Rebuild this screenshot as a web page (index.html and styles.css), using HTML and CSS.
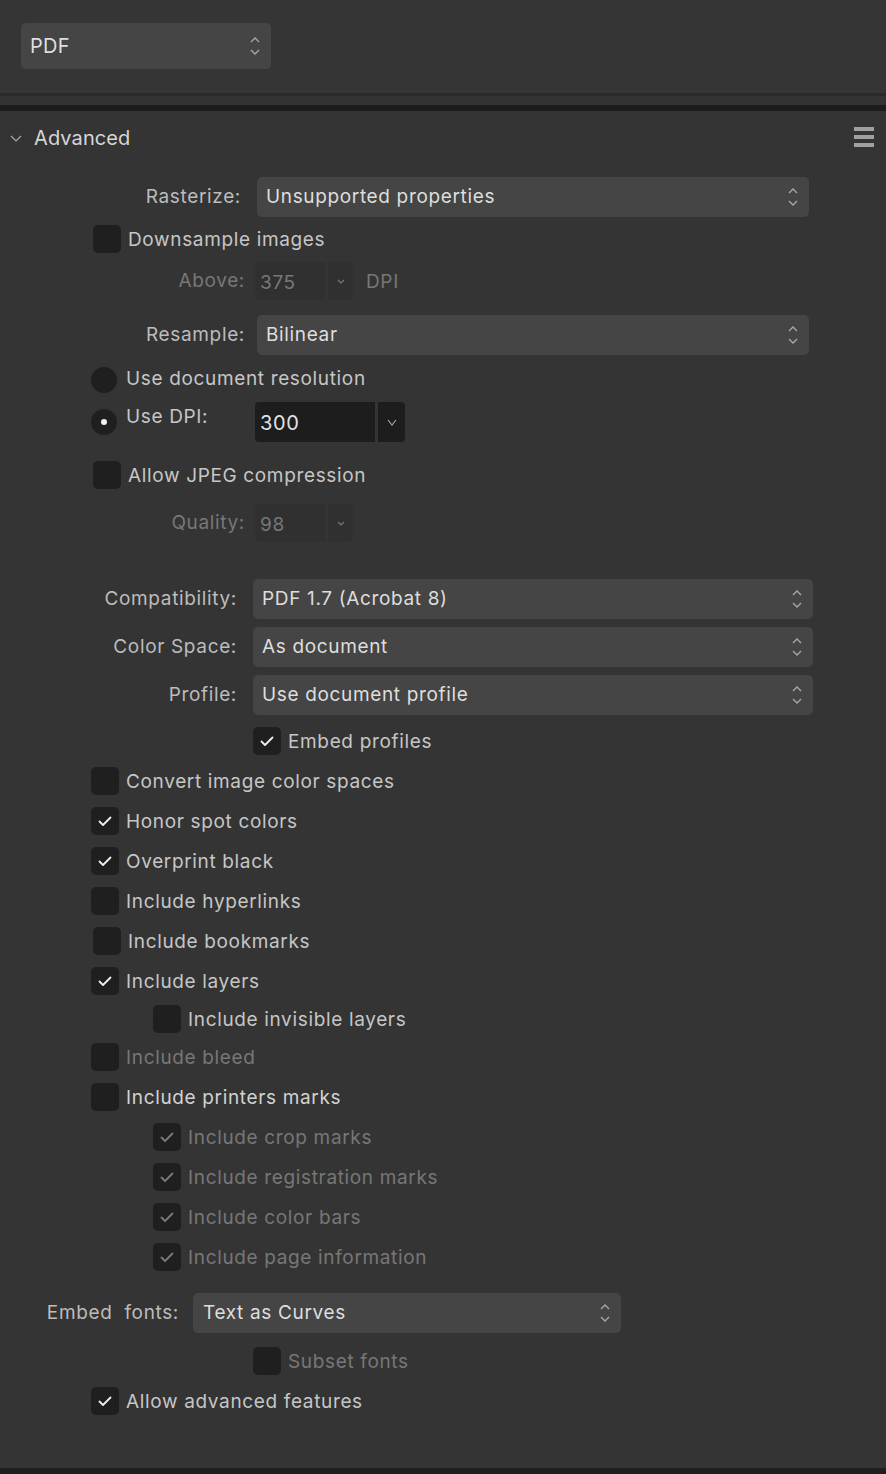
FILE: index.html
```html
<!DOCTYPE html>
<html lang="en">
<head>
    <meta charset="UTF-8">
    <title>Export - PDF Advanced</title>
    <link rel="stylesheet" href="styles.css">
</head>
<body>
    <div class="top">
        <div class="select fmt">
            <span>PDF</span>
            <svg class="updown" viewBox="0 0 10 18" width="10" height="18"><path d="M1 5L5 1L9 5M1 13L5 17L9 13"/></svg>
        </div>
    </div>
    <div class="split"></div>

    <section class="panel">
        <header class="panel-head">
            <svg class="twisty" viewBox="0 0 12 7" width="12" height="7"><path d="M1 1L6 6L11 1"/></svg>
            <h2>Advanced</h2>
            <span class="menu"><i></i><i></i><i></i></span>
        </header>

        <div class="field raster">
            <label class="field-label">Rasterize:</label>
            <div class="select wide">
                <span>Unsupported properties</span>
                <svg class="updown" viewBox="0 0 10 18" width="10" height="18"><path d="M1 5L5 1L9 5M1 13L5 17L9 13"/></svg>
            </div>
        </div>

        <div class="check shift m8">
            <span class="box"></span>
            <span class="text">Downsample images</span>
        </div>

        <div class="field small m9 off">
            <label class="field-label">Above:</label>
            <div class="spin">
                <span class="spin-val">375</span>
                <span class="spin-btn"><svg viewBox="0 0 8 5" width="8" height="5"><path d="M1 1L4 4L7 1"/></svg></span>
            </div>
            <span class="unit">DPI</span>
        </div>

        <div class="field resample m15">
            <label class="field-label">Resample:</label>
            <div class="select wide">
                <span>Bilinear</span>
                <svg class="updown" viewBox="0 0 10 18" width="10" height="18"><path d="M1 5L5 1L9 5M1 13L5 17L9 13"/></svg>
            </div>
        </div>

        <div class="check radio-row m12">
            <span class="radio"></span>
            <span class="text">Use document resolution</span>
        </div>

        <div class="check radio-row dpi m9">
            <span class="radio on"></span>
            <span class="text dpi-text">Use DPI:</span>
            <div class="spin dark">
                <span class="spin-val">300</span>
                <span class="spin-btn"><svg viewBox="0 0 10 7" width="10" height="7"><path d="M1 1L5 6L9 1"/></svg></span>
            </div>
        </div>

        <div class="check shift m19">
            <span class="box"></span>
            <span class="text">Allow JPEG compression</span>
        </div>

        <div class="field small m15 off">
            <label class="field-label">Quality:</label>
            <div class="spin">
                <span class="spin-val">98</span>
                <span class="spin-btn"><svg viewBox="0 0 8 5" width="8" height="5"><path d="M1 1L4 4L7 1"/></svg></span>
            </div>
        </div>

        <div class="field pdf m37">
            <label class="field-label">Compatibility:</label>
            <div class="select wide">
                <span>PDF 1.7 (Acrobat 8)</span>
                <svg class="updown" viewBox="0 0 10 18" width="10" height="18"><path d="M1 5L5 1L9 5M1 13L5 17L9 13"/></svg>
            </div>
        </div>
        <div class="field pdf m8">
            <label class="field-label">Color Space:</label>
            <div class="select wide">
                <span>As document</span>
                <svg class="updown" viewBox="0 0 10 18" width="10" height="18"><path d="M1 5L5 1L9 5M1 13L5 17L9 13"/></svg>
            </div>
        </div>
        <div class="field pdf m8">
            <label class="field-label">Profile:</label>
            <div class="select wide">
                <span>Use document profile</span>
                <svg class="updown" viewBox="0 0 10 18" width="10" height="18"><path d="M1 5L5 1L9 5M1 13L5 17L9 13"/></svg>
            </div>
        </div>

        <div class="check deep m12">
            <span class="box"><svg viewBox="0 0 14 11" width="14" height="11"><path d="M1.5 5.5L5 9L12.5 1.5"/></svg></span>
            <span class="text">Embed profiles</span>
        </div>

        <div class="check m12">
            <span class="box"></span>
            <span class="text">Convert image color spaces</span>
        </div>
        <div class="check m12">
            <span class="box"><svg viewBox="0 0 14 11" width="14" height="11"><path d="M1.5 5.5L5 9L12.5 1.5"/></svg></span>
            <span class="text">Honor spot colors</span>
        </div>
        <div class="check m12">
            <span class="box"><svg viewBox="0 0 14 11" width="14" height="11"><path d="M1.5 5.5L5 9L12.5 1.5"/></svg></span>
            <span class="text">Overprint black</span>
        </div>
        <div class="check m12">
            <span class="box"></span>
            <span class="text">Include hyperlinks</span>
        </div>
        <div class="check shift m12">
            <span class="box"></span>
            <span class="text">Include bookmarks</span>
        </div>
        <div class="check m12">
            <span class="box"><svg viewBox="0 0 14 11" width="14" height="11"><path d="M1.5 5.5L5 9L12.5 1.5"/></svg></span>
            <span class="text">Include layers</span>
        </div>
        <div class="check sub m10">
            <span class="box"></span>
            <span class="text">Include invisible layers</span>
        </div>
        <div class="check m10 off">
            <span class="box"></span>
            <span class="text">Include bleed</span>
        </div>
        <div class="check m12">
            <span class="box"></span>
            <span class="text bright">Include printers marks</span>
        </div>
        <div class="check sub m12 off">
            <span class="box"><svg viewBox="0 0 14 11" width="14" height="11"><path d="M1.5 5.5L5 9L12.5 1.5"/></svg></span>
            <span class="text">Include crop marks</span>
        </div>
        <div class="check sub m12 off">
            <span class="box"><svg viewBox="0 0 14 11" width="14" height="11"><path d="M1.5 5.5L5 9L12.5 1.5"/></svg></span>
            <span class="text">Include registration marks</span>
        </div>
        <div class="check sub m12 off">
            <span class="box"><svg viewBox="0 0 14 11" width="14" height="11"><path d="M1.5 5.5L5 9L12.5 1.5"/></svg></span>
            <span class="text">Include color bars</span>
        </div>
        <div class="check sub m12 off">
            <span class="box"><svg viewBox="0 0 14 11" width="14" height="11"><path d="M1.5 5.5L5 9L12.5 1.5"/></svg></span>
            <span class="text">Include page information</span>
        </div>

        <div class="field fonts m22">
            <label class="field-label">Embed&nbsp; fonts:</label>
            <div class="select narrow">
                <span>Text as Curves</span>
                <svg class="updown" viewBox="0 0 10 18" width="10" height="18"><path d="M1 5L5 1L9 5M1 13L5 17L9 13"/></svg>
            </div>
        </div>

        <div class="check deep m14 off">
            <span class="box"></span>
            <span class="text">Subset fonts</span>
        </div>
        <div class="check m12">
            <span class="box"><svg viewBox="0 0 14 11" width="14" height="11"><path d="M1.5 5.5L5 9L12.5 1.5"/></svg></span>
            <span class="text">Allow advanced features</span>
        </div>
    </section>
    <div class="foot"></div>
</body>
</html>
```

FILE: styles.css
```css
html, body {
    margin: 0;
    height: 100%;
}
body {
    background: #343434;
    color: #c6c6c6;
    font-family: Inter, "Noto Sans", sans-serif;
    font-size: 19px;
    letter-spacing: 0.65px;
    display: flex;
    flex-direction: column;
    overflow: hidden;
}

/* format picker */
.top {
    height: 93px;
    box-sizing: border-box;
    padding: 23px 0 0 21px;
    background: #353535;
}
.split {
    height: 9px;
    border-top: 3px solid #2a2a2a;
    border-bottom: 6px solid #1c1c1c;
    background: #333;
}

.select {
    display: flex;
    align-items: center;
    justify-content: space-between;
    height: 40px;
    box-sizing: border-box;
    padding: 0 11px 0 9px;
    background: #454545;
    border-radius: 5px;
    color: #dedede;
}
.select > span { padding-bottom: 1px; }
.select.fmt {
    width: 250px;
    height: 46px;
    padding-left: 9px;
    font-size: 20px;
    letter-spacing: 0.3px;
}
.select.wide { width: 552px; }
.field.pdf .select.wide { width: 560px; }
.select.narrow { width: 428px; padding-left: 10px; }
.updown {
    fill: none;
    stroke: #a9a9a9;
    stroke-width: 1.3;
}

/* panel */
.panel {
    flex: 1;
    background: #343434;
}
.panel-head {
    height: 54px;
    display: flex;
    align-items: center;
    padding: 0 12px 0 10px;
}
.twisty {
    fill: none;
    stroke: #a8a8a8;
    stroke-width: 1.2;
    margin-top: 1px;
}
.panel-head h2 {
    flex: 1;
    margin: 0 0 0 12px;
    font-size: 20px;
    font-weight: 400;
    letter-spacing: 0.1px;
    color: #d6d6d6;
}
.menu {
    display: flex;
    flex-direction: column;
    gap: 4px;
    margin-top: -2px;
}
.menu i {
    display: block;
    width: 20px;
    height: 4px;
    background: #a0a0a0;
}

/* label + control rows */
.field {
    display: flex;
    align-items: center;
    height: 40px;
}
.field-label {
    flex: none;
    text-align: right;
    color: #bcbcbc;
    padding-bottom: 2px;
}
.field.raster { margin-top: 12px; }
.field.raster .field-label { width: 241px; margin-right: 16px; }
.field.resample .field-label { width: 245px; margin-right: 12px; }
.field.small { height: 38px; }
.field.small .field-label { width: 245px; margin-right: 10px; }
.field.pdf .field-label { width: 237px; margin-right: 16px; }
.field.fonts .field-label { width: 179px; margin-right: 14px; }

.spin {
    display: flex;
    height: 38px;
    gap: 3px;
}
.spin-val {
    width: 70px;
    box-sizing: border-box;
    padding: 2px 0 0 5px;
    display: flex;
    align-items: center;
    background: #303030;
    border-radius: 4px 0 0 4px;
}
.spin-btn {
    width: 25px;
    display: flex;
    align-items: center;
    justify-content: center;
    background: #303030;
    border-radius: 0 4px 4px 0;
}
.spin-btn svg {
    fill: none;
    stroke: #7a7a7a;
    stroke-width: 1.1;
}
.unit {
    margin-left: 13px;
}
.spin.dark {
    height: 40px;
}
.spin.dark .spin-val {
    width: 120px;
    background: #1d1d1d;
    color: #e2e2e2;
    font-size: 20px;
}
.spin.dark .spin-btn {
    width: 27px;
    background: #1d1d1d;
}
.spin.dark .spin-btn svg {
    stroke: #a6a6a6;
}

/* checkboxes and radios */
.check {
    display: flex;
    align-items: center;
    height: 28px;
    margin-left: 91px;
}
.check.shift { margin-left: 93px; }
.check.sub { margin-left: 153px; }
.check.deep { margin-left: 253px; }
.box {
    flex: none;
    width: 28px;
    height: 28px;
    margin-right: 7px;
    border-radius: 5px;
    background: #1f1f1f;
    display: flex;
    align-items: center;
    justify-content: center;
}
.box svg {
    fill: none;
    stroke: #f0f0f0;
    stroke-width: 1.8;
    stroke-linecap: round;
    stroke-linejoin: round;
    margin-top: 1px;
}
.radio-row { height: 26px; }
.radio-row.dpi { height: 40px; }
.radio {
    flex: none;
    width: 26px;
    height: 26px;
    margin-right: 9px;
    border-radius: 50%;
    background: #1f1f1f;
    display: flex;
    align-items: center;
    justify-content: center;
}
.radio.on::after {
    content: "";
    width: 6px;
    height: 6px;
    border-radius: 50%;
    background: #f2f2f2;
}
.radio-row .text { margin-top: -3px; }
.radio-row .dpi-text {
    flex: none;
    width: 129px;
    white-space: nowrap;
    align-self: flex-start;
    margin-top: 3px;
}
.text.bright { color: #d2d2d2; }

.off,
.off .field-label {
    color: #777;
}
.off .box svg { stroke: #7a7a7a; }

/* vertical gaps between rows */
.m8 { margin-top: 8px; }
.m9 { margin-top: 9px; }
.m10 { margin-top: 10px; }
.m12 { margin-top: 12px; }
.m14 { margin-top: 14px; }
.m15 { margin-top: 15px; }
.m19 { margin-top: 19px; }
.m22 { margin-top: 22px; }
.m37 { margin-top: 37px; }

.foot {
    height: 6px;
    background: #1f1f1f;
}
```
